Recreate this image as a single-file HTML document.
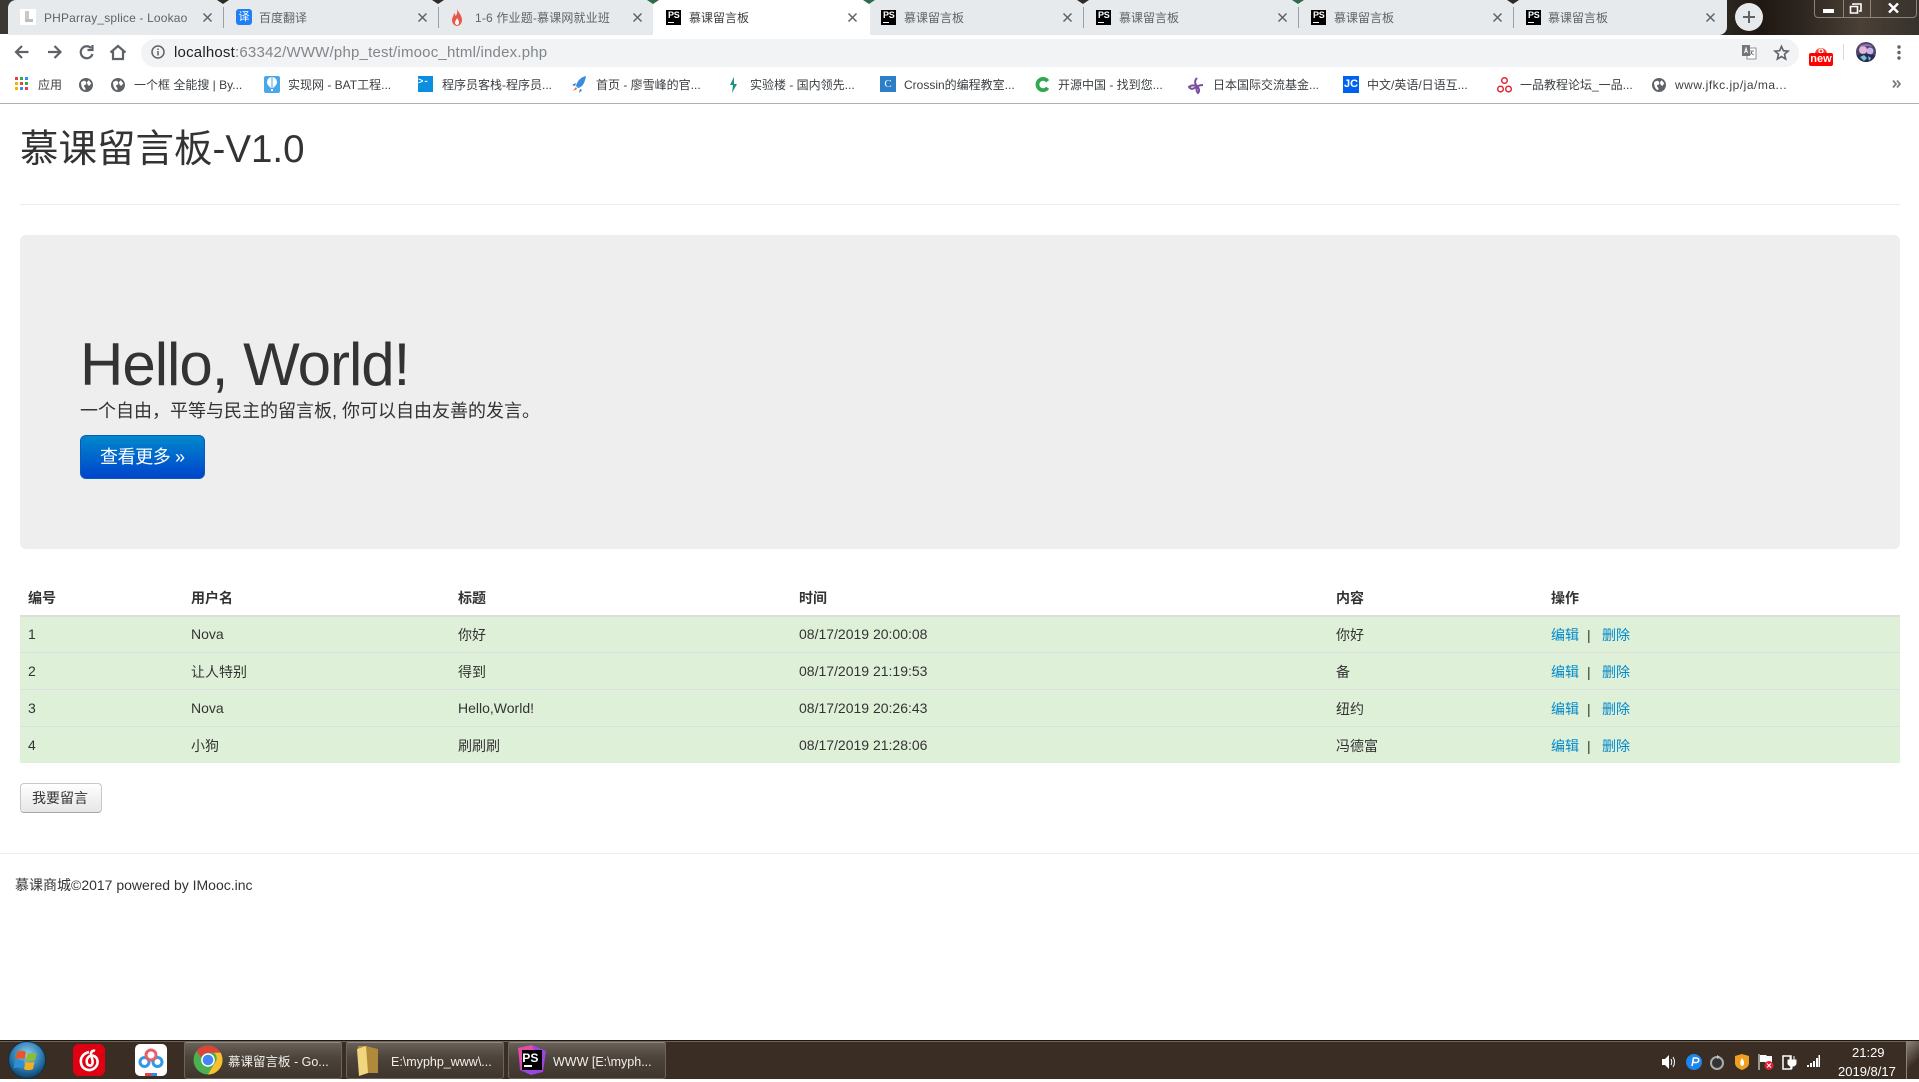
<!DOCTYPE html>
<html lang="zh"><head><meta charset="utf-8"><title>慕课留言板</title>
<style>
html,body{margin:0;padding:0;background:#fff}
body{width:1919px;height:1079px;position:relative;overflow:hidden;font-family:"Liberation Sans","Noto Sans CJK SC",sans-serif;color:#333}
.a{position:absolute}
.t{position:absolute;white-space:nowrap;line-height:20px;height:20px}
svg{position:absolute;overflow:visible}
.tabt{font-size:12px;color:#5f6368;top:8px}
.x{position:absolute;top:13px;width:9px;height:9px}
.x svg{left:0;top:0}
.sep{position:absolute;top:7px;width:1px;height:21px;background:#9aa0a6}
.bm{font-size:12px;color:#3c4043;top:75px}
.ps{position:absolute;top:10px;width:15px;height:15px;background:#000;color:#fff;font:bold 9px/11px "Liberation Sans",sans-serif;text-indent:2px;letter-spacing:-.3px}
.ps:after{content:"";position:absolute;left:2px;bottom:2px;width:6px;height:1px;background:#fff}
.mark{position:absolute;top:0;width:0;height:0;border-left:6px solid transparent;border-right:6px solid transparent;border-top:4px solid #2f2a24}
.g{border-top-color:#2f6b4a}
.td{font-size:14px;color:#333}
.th{font-size:14px;font-weight:bold;color:#333;top:588px}
.row{position:absolute;left:20px;width:1880px;height:36px;background:#dff0d8;border-top:1px solid #ddd}
.lk{color:#08c;font-size:14px}
.tb{position:absolute;top:1041px;height:36px;width:156px;border:1px solid #6d655c;border-radius:3px;background:linear-gradient(#6a625a,#4c433a 45%,#3f352c);box-shadow:inset 0 1px 0 rgba(255,255,255,.25)}
.tbt{color:#f2f0ec;font-size:12.5px;top:1051px}
</style></head><body>

<!-- window frame + tab strip -->
<div class="a" style="left:0;top:0;width:1919px;height:35px;background:linear-gradient(90deg,#3b3732 0,#2c2620 1728px,#1e1712 1760px,#2c251f 1800px,#4a4036 1860px,#37322c 1919px)"></div>
<div class="a" style="left:8px;top:0;width:1719px;height:35px;background:#e7eaed;border-radius:8px 0 8px 0"></div>
<div class="a" style="left:0;top:34px;width:8px;height:1px;background:#fff"></div>
<div class="a" style="left:653px;top:0;width:217px;height:35px;background:#fff;border-radius:8px 8px 0 0"></div>

<div class="mark" style="left:217px"></div><div class="mark" style="left:432px"></div>
<div class="mark g" style="left:647px"></div><div class="mark g" style="left:863px"></div>
<div class="mark" style="left:1077px"></div><div class="mark g" style="left:1292px"></div><div class="mark" style="left:1507px"></div>

<div class="sep" style="left:223px"></div><div class="sep" style="left:438px"></div><div class="sep" style="left:1083px"></div><div class="sep" style="left:1298px"></div><div class="sep" style="left:1513px"></div>

<!-- tab 1 -->
<div class="a" style="left:20px;top:9px;width:16px;height:16px;background:#fff"></div>
<div class="a" style="left:25px;top:11px;width:4px;height:11px;background:#c9c9c9"></div><div class="a" style="left:25px;top:19px;width:8px;height:3px;background:#bdbdbd"></div>
<div class="t tabt" style="left:44px;letter-spacing:.17px">PHParray_splice - Lookao</div>
<div class="x" style="left:203px"><svg width="9" height="9" viewBox="0 0 9 9"><path d="M.5.5l8 8M8.500.5l-8 8" stroke="#5f6368" stroke-width="1.500"/></svg></div>
<!-- tab 2 -->
<div class="a" style="left:236px;top:9px;width:16px;height:16px;background:#1f80f5;border-radius:3px;color:#fff;font-size:11px;line-height:16px;text-align:center">译</div>
<div class="t tabt" style="left:259px">百度翻译</div>
<div class="x" style="left:418px"><svg width="9" height="9" viewBox="0 0 9 9"><path d="M.5.5l8 8M8.500.5l-8 8" stroke="#5f6368" stroke-width="1.500"/></svg></div>
<!-- tab 3 -->
<svg style="left:451px;top:9px" width="12" height="17" viewBox="0 0 12 17"><path d="M6 0C7 3 11 6 11 11c0 3.500-2.500 6-5 6s-5-2.500-5-6c0-3 2-4 2-7 1 1 1.500 2 1.500 3C6 6 6.500 3 6 0z" fill="#e8574a"/><path d="M6 9c1 1.500 2 3 2 4.500S7 16 6 16s-2-1-2-2.500S5.500 11 6 9z" fill="#fff"/></svg>
<div class="t tabt" style="left:475px;letter-spacing:.17px">1-6 作业题-慕课网就业班</div>
<div class="x" style="left:633px"><svg width="9" height="9" viewBox="0 0 9 9"><path d="M.5.5l8 8M8.500.5l-8 8" stroke="#5f6368" stroke-width="1.500"/></svg></div>
<!-- tab 4 -->
<div class="ps" style="left:666px">PS</div><div class="t tabt" style="left:689px;color:#3c4043">慕课留言板</div>
<div class="x" style="left:848px"><svg width="9" height="9" viewBox="0 0 9 9"><path d="M.5.5l8 8M8.500.5l-8 8" stroke="#5f6368" stroke-width="1.500"/></svg></div>
<!-- tab 5-8 -->
<div class="ps" style="left:881px">PS</div><div class="t tabt" style="left:904px">慕课留言板</div>
<div class="x" style="left:1063px"><svg width="9" height="9" viewBox="0 0 9 9"><path d="M.5.5l8 8M8.500.5l-8 8" stroke="#5f6368" stroke-width="1.500"/></svg></div>
<div class="ps" style="left:1096px">PS</div><div class="t tabt" style="left:1119px">慕课留言板</div>
<div class="x" style="left:1278px"><svg width="9" height="9" viewBox="0 0 9 9"><path d="M.5.5l8 8M8.500.5l-8 8" stroke="#5f6368" stroke-width="1.500"/></svg></div>
<div class="ps" style="left:1311px">PS</div><div class="t tabt" style="left:1334px">慕课留言板</div>
<div class="x" style="left:1493px"><svg width="9" height="9" viewBox="0 0 9 9"><path d="M.5.5l8 8M8.500.5l-8 8" stroke="#5f6368" stroke-width="1.500"/></svg></div>
<div class="ps" style="left:1526px">PS</div><div class="t tabt" style="left:1548px">慕课留言板</div>
<div class="x" style="left:1706px"><svg width="9" height="9" viewBox="0 0 9 9"><path d="M.5.5l8 8M8.500.5l-8 8" stroke="#5f6368" stroke-width="1.500"/></svg></div>
<!-- new tab -->
<svg style="left:1735px;top:3px" width="28" height="28" viewBox="0 0 28 28"><circle cx="14" cy="14" r="14" fill="#e7eaed"/><path d="M14 8v12M8 14h12" stroke="#5f6368" stroke-width="2"/></svg>
<!-- window controls -->
<div class="a" style="left:1814px;top:-2px;width:103px;height:20px;border:1px solid #8d8479;border-radius:0 0 4px 4px;box-sizing:border-box"></div>
<div class="a" style="left:1843px;top:0;width:1px;height:17px;background:#8d8479"></div><div class="a" style="left:1870px;top:0;width:1px;height:17px;background:#8d8479"></div>
<div class="a" style="left:1823px;top:9px;width:11px;height:4px;background:#fff"></div>
<svg style="left:1849px;top:3px" width="13" height="11" viewBox="0 0 13 11"><path d="M4 2V1h8v7h-2M1.500 3.500h7v6.500h-7z" fill="none" stroke="#fff" stroke-width="1.600"/></svg>
<svg style="left:1888px;top:3px" width="11" height="10" viewBox="0 0 11 10"><path d="M1 .5l9 9M10 .5l-9 9" stroke="#fff" stroke-width="2.400"/></svg>

<!-- toolbar -->
<div class="a" style="left:0;top:35px;width:1919px;height:68px;background:#fff;border-bottom:1px solid #b0b0b0"></div>
<svg style="left:14px;top:44px" width="120" height="16" viewBox="0 0 120 16" fill="none" stroke="#5f6368" stroke-width="2.200">
<path d="M14.500 8H2M8 2 2 8l6 6"/><path d="M34 8h12.500M40.500 2l6 6-6 6"/>
<path d="M77 4A6 6 0 1 0 78.500 10M78.500 1v5h-5" /><path d="M96.500 8.500 104 2l7.500 6.500M99 7v8h10V7"/></svg>
<div class="a" style="left:141px;top:39px;width:1658px;height:28px;background:#f1f3f4;border-radius:14px"></div>
<svg style="left:151px;top:45px" width="14" height="14" viewBox="0 0 14 14"><circle cx="7" cy="7" r="6" fill="none" stroke="#5f6368" stroke-width="1.500"/><path d="M7 6v4.500M7 3.500v1.500" stroke="#5f6368" stroke-width="1.500"/></svg>
<div class="t" style="left:174px;top:43px;font-size:15px;letter-spacing:.2px;color:#80868b"><span style="color:#202124">localhost</span>:63342/WWW/php_test/imooc_html/index.php</div>
<svg style="left:1742px;top:45px" width="14" height="14" viewBox="0 0 14 14"><path d="M5 3h9v11H5z" fill="#fff" stroke="#777" stroke-width=".8"/><path d="M0 0h8v11H0z" fill="#72767a"/><path d="M2.500 8 4 3l1.500 5M3 6.500h2" stroke="#fff" fill="none" stroke-width=".9"/><path d="M8 6h4M10 6c0 2-1 3-2 4M9 7c.5 1.500 1.500 2.500 3 3" stroke="#666" fill="none" stroke-width=".8"/></svg>
<svg style="left:1774px;top:45px" width="15" height="15" viewBox="0 0 16 16"><path d="M8 1.500l2 4.600 5 .4-3.800 3.300L12.400 15 8 12.300 3.600 15l1.200-5.200L1 6.500l5-.4z" fill="none" stroke="#5f6368" stroke-width="1.700"/></svg>
<svg style="left:1815px;top:45px" width="12" height="9" viewBox="0 0 12 9"><path d="M0 9a6 6 0 0 1 12 0z" fill="#e8433a"/><circle cx="6" cy="6" r="2" fill="none" stroke="#fff" stroke-width="1.300"/></svg>
<div class="a" style="left:1809px;top:53px;width:24px;height:13px;background:#f00;color:#fff;font:bold 11px/12px 'Liberation Sans',sans-serif;text-align:center;border-radius:2px">new</div>
<div class="a" style="left:1843px;top:44px;width:1px;height:16px;background:#d5d7da"></div>
<svg style="left:1856px;top:42px" width="20" height="20" viewBox="0 0 20 20"><defs><clipPath id="av"><circle cx="10" cy="10" r="10"/></clipPath></defs><g clip-path="url(#av)"><rect width="20" height="20" fill="#4c4668"/><circle cx="7" cy="8" r="4" fill="#e3b8d8"/><circle cx="14" cy="9" r="3.500" fill="#c7b3e6"/><path d="M0 14c4-3 14-3 20 0v6H0z" fill="#2b2a50"/><path d="M4 15l4-2 3 3-3 3zM12 14l3 2-2 3z" fill="#6fc6d8"/><path d="M3 5c3-4 11-4 14 0-3-1-10-1-14 0z" fill="#8d6fb8"/></g></svg>
<svg style="left:1897px;top:45px" width="4" height="15" viewBox="0 0 4 15" fill="#5f6368"><circle cx="2" cy="2" r="1.700"/><circle cx="2" cy="7.500" r="1.700"/><circle cx="2" cy="13" r="1.700"/></svg>

<!-- bookmarks -->
<svg style="left:15px;top:77px" width="13" height="13" viewBox="0 0 13 13"><rect width="3" height="3" fill="#e8433a"/><rect x="5" width="3" height="3" fill="#34a853"/><rect x="10" width="3" height="3" fill="#4285f4"/><rect y="5" width="3" height="3" fill="#f4b400"/><rect x="5" y="5" width="3" height="3" fill="#e8433a"/><rect x="10" y="5" width="3" height="3" fill="#34a853"/><rect y="10" width="3" height="3" fill="#f4b400"/><rect x="5" y="10" width="3" height="3" fill="#4285f4"/><rect x="10" y="10" width="3" height="3" fill="#e8433a"/></svg>
<div class="t bm" style="left:38px">应用</div>
<svg style="left:79px;top:78px" width="14" height="14" viewBox="0 0 16 16"><circle cx="8" cy="8" r="8" fill="#5f6368"/><path d="M2.500 4.500 6 3c2 1 3 2 2 4S5 7 6 10c1 1 2 2 1 4-3-1-5-5-4.500-9.500zM11 2.500 14 6l-2 3-2-1-1-3z" fill="#fff"/></svg>
<svg style="left:111px;top:78px" width="14" height="14" viewBox="0 0 16 16"><circle cx="8" cy="8" r="8" fill="#5f6368"/><path d="M2.500 4.500 6 3c2 1 3 2 2 4S5 7 6 10c1 1 2 2 1 4-3-1-5-5-4.500-9.500zM11 2.500 14 6l-2 3-2-1-1-3z" fill="#fff"/></svg>
<div class="t bm" style="left:134px">一个框 全能搜 | By...</div>
<div class="a" style="left:264px;top:76px;width:16px;height:17px;background:#4aa8e8;border-radius:2px"></div><svg style="left:264px;top:76px" width="16" height="17" viewBox="0 0 16 17"><path d="M3 6a5 5 0 0 1 10 0c0 3-3 5-4 6H7C6 11 3 9 3 6z" fill="#fff"/><path d="M8 1v11" stroke="#4aa8e8"/><rect x="7" y="13" width="2" height="2" fill="#fff"/></svg>
<div class="t bm" style="left:288px">实现网 - BAT工程...</div>
<div class="a" style="left:418px;top:76px;width:15px;height:16px;background:#0a8fe0;color:#fff;font:bold 9px/12px 'Liberation Mono',monospace">&gt;-</div>
<div class="t bm" style="left:442px">程序员客栈-程序员...</div>
<svg style="left:571px;top:76px" width="16" height="17" viewBox="0 0 16 17"><path d="M15 0C10 1 6 5 5 10l2 2c5-1 7-6 8-12z" fill="#3d8be0"/><path d="M2 15l3-4 1 2z" fill="#e8574a"/><path d="M1 9l4-2-1 3zM9 13l-1 4 3-3z" fill="#2f6fc0"/></svg>
<div class="t bm" style="left:596px">首页 - 廖雪峰的官...</div>
<svg style="left:728px;top:77px" width="11" height="16" viewBox="0 0 11 16"><path d="M6 0 2 8h3l-1 8 5-9H6z" fill="#1f8f80"/></svg>
<div class="t bm" style="left:750px">实验楼 - 国内领先...</div>
<div class="a" style="left:880px;top:76px;width:16px;height:16px;background:#2c7fc4;color:#fff;font:11px/16px 'Liberation Serif',serif;text-align:center">C</div>
<div class="t bm" style="left:904px">Crossin的编程教室...</div>
<svg style="left:1035px;top:77px" width="15" height="15" viewBox="0 0 16 16"><path d="M13.500 4.500A6 6 0 1 0 13.500 11.500" fill="none" stroke="#2fa84f" stroke-width="4"/></svg>
<div class="t bm" style="left:1058px">开源中国 - 找到您...</div>
<svg style="left:1188px;top:77px" width="16" height="17" viewBox="0 0 16 17" fill="none" stroke="#7a4fa0" stroke-width="2"><path d="M9 1C6 4 7 7 9 9c2 2 3 5 1 7-2-2-2-5 0-7 2-1 4-1 5-1M9 9C6 8 3 8 1 10c2 3 5 2 8-1"/></svg>
<div class="t bm" style="left:1213px">日本国际交流基金...</div>
<div class="a" style="left:1343px;top:76px;width:16px;height:17px;background:#0060f0;color:#fff;font:bold 11px/17px 'Liberation Sans',sans-serif;text-align:center">JC</div>
<div class="t bm" style="left:1367px">中文/英语/日语互...</div>
<svg style="left:1497px;top:77px" width="15" height="16" viewBox="0 0 15 16" fill="none" stroke="#e0252f" stroke-width="1.500"><circle cx="7.500" cy="3.500" r="2.800"/><circle cx="3.500" cy="12" r="2.800"/><circle cx="11.500" cy="12" r="2.800"/></svg>
<div class="t bm" style="left:1520px">一品教程论坛_一品...</div>
<svg style="left:1652px;top:78px" width="14" height="14" viewBox="0 0 16 16"><circle cx="8" cy="8" r="8" fill="#5f6368"/><path d="M2.500 4.500 6 3c2 1 3 2 2 4S5 7 6 10c1 1 2 2 1 4-3-1-5-5-4.500-9.500zM11 2.500 14 6l-2 3-2-1-1-3z" fill="#fff"/></svg>
<div class="t bm" style="left:1675px;letter-spacing:.5px">www.jfkc.jp/ja/ma...</div>
<svg style="left:1892px;top:80px" width="9" height="8" viewBox="0 0 9 8" fill="none" stroke="#7a7e83" stroke-width="1.800"><path d="M1 0.500 4 4 1 7.500M5 0.500 8 4 5 7.500"/></svg>

<!-- page -->
<div class="t" style="left:20px;top:125px;height:50px;line-height:50px;font-size:38.5px;color:#333">慕课留言板-V1.0</div>
<div class="a" style="left:20px;top:204px;width:1880px;height:1px;background:#eee"></div>
<div class="a" style="left:20px;top:235px;width:1880px;height:314px;background:#eee;border-radius:6px"></div>
<div class="t" style="left:80px;top:330px;height:70px;line-height:70px;font-size:60px;color:#333;letter-spacing:-1px">Hello, World!</div>
<div class="t" style="left:80px;top:401px;font-size:18px;color:#333;">一个自由，平等与民主的留言板, 你可以自由友善的发言。</div>
<div class="a" style="left:80px;top:435px;width:125px;height:44px;border-radius:6px;background:linear-gradient(#08c,#04c);border:1px solid #0a5bb8;box-sizing:border-box"></div>
<div class="t" style="left:100px;top:447px;font-size:18px;color:#fff;letter-spacing:-.4px">查看更多 »</div>

<!-- table -->
<div class="t th" style="left:28px">编号</div><div class="t th" style="left:191px">用户名</div><div class="t th" style="left:458px">标题</div><div class="t th" style="left:799px">时间</div><div class="t th" style="left:1336px">内容</div><div class="t th" style="left:1551px">操作</div>
<div class="row" style="top:616px;border-top:0;height:37px"></div>
<div class="a" style="left:20px;top:615px;width:1880px;height:2px;background:#ddd"></div>
<div class="row" style="top:652px"></div><div class="row" style="top:689px"></div><div class="row" style="top:726px"></div>

<div class="t td" style="left:28px;top:624px">1</div><div class="t td" style="left:191px;top:624px">Nova</div><div class="t td" style="left:458px;top:625px">你好</div><div class="t td" style="left:799px;top:624px">08/17/2019 20:00:08</div><div class="t td" style="left:1336px;top:625px">你好</div>
<div class="t lk" style="left:1551px;top:625px">编辑</div><div class="t td" style="left:1587px;top:625px">|</div><div class="t lk" style="left:1602px;top:625px">删除</div>

<div class="t td" style="left:28px;top:661px">2</div><div class="t td" style="left:191px;top:662px">让人特别</div><div class="t td" style="left:458px;top:662px">得到</div><div class="t td" style="left:799px;top:661px">08/17/2019 21:19:53</div><div class="t td" style="left:1336px;top:662px">备</div>
<div class="t lk" style="left:1551px;top:662px">编辑</div><div class="t td" style="left:1587px;top:662px">|</div><div class="t lk" style="left:1602px;top:662px">删除</div>

<div class="t td" style="left:28px;top:698px">3</div><div class="t td" style="left:191px;top:698px">Nova</div><div class="t td" style="left:458px;top:698px">Hello,World!</div><div class="t td" style="left:799px;top:698px">08/17/2019 20:26:43</div><div class="t td" style="left:1336px;top:699px">纽约</div>
<div class="t lk" style="left:1551px;top:699px">编辑</div><div class="t td" style="left:1587px;top:699px">|</div><div class="t lk" style="left:1602px;top:699px">删除</div>

<div class="t td" style="left:28px;top:735px">4</div><div class="t td" style="left:191px;top:736px">小狗</div><div class="t td" style="left:458px;top:736px">刷刷刷</div><div class="t td" style="left:799px;top:735px">08/17/2019 21:28:06</div><div class="t td" style="left:1336px;top:736px">冯德富</div>
<div class="t lk" style="left:1551px;top:736px">编辑</div><div class="t td" style="left:1587px;top:736px">|</div><div class="t lk" style="left:1602px;top:736px">删除</div>

<!-- write button -->
<div class="a" style="left:20px;top:783px;width:82px;height:30px;box-sizing:border-box;border:1px solid #c8c8c8;border-bottom-color:#a8a8a8;border-radius:4px;background:linear-gradient(#fff,#e6e6e6)"></div>
<div class="t" style="left:32px;top:788px;font-size:14px;color:#333">我要留言</div>

<!-- footer -->
<div class="a" style="left:0;top:853px;width:1919px;height:1px;background:#eee"></div>
<div class="t" style="left:15px;top:875px;font-size:14px;color:#333">慕课商城©2017 powered by IMooc.inc</div>

<!-- taskbar -->
<div class="a" style="left:0;top:1040px;width:1919px;height:39px;background:#3a2e24;border-top:1px solid #1e1811;box-sizing:border-box;box-shadow:inset 0 1px 0 #6e645a"></div>
<svg style="left:8px;top:1041px" width="38" height="38" viewBox="0 0 38 38"><defs><radialGradient id="o" cx=".5" cy=".35" r=".65"><stop offset="0" stop-color="#8fd0f2"/><stop offset=".6" stop-color="#2f7db0"/><stop offset="1" stop-color="#0d3f66"/></radialGradient></defs><circle cx="19" cy="19" r="18.500" fill="url(#o)" stroke="#0c2f4a"/><path d="M9 11c3-1.500 6-1.500 9 0l-1.500 7.500c-3-1.500-6-1.500-9 0z" fill="#e8562a"/><path d="M19.500 11.500c3 1.500 6 1.500 9 0L27 19c-3 1.500-6 1.500-9 0z" fill="#8cc02a"/><path d="M7 20c3-1.500 6-1.500 9 0l-1.500 7.500c-3-1.500-6-1.500-9 0z" fill="#2a90d8"/><path d="M17.500 20.500c3 1.500 6 1.500 9 0L25 28c-3 1.500-6 1.500-9 0z" fill="#f4b020"/></svg>
<div class="a" style="left:73px;top:1044px;width:32px;height:32px;background:#e00012;border-radius:6px"></div>
<svg style="left:73px;top:1044px" width="32" height="32" viewBox="0 0 32 32" fill="none" stroke="#fff" stroke-width="2.600"><path d="M16 8C10 9.500 7 14 8 19c1 6 7 8 11 6.500 5-2 6.500-6.500 5-10.500-1.500-3.500-6-4.500-8.500-2-3 3-2 8 1 8.500 2.500.5 3.500-2 3-5l-1.500-6.500C18 7.500 20 6 22 7"/></svg>
<div class="a" style="left:135px;top:1044px;width:32px;height:32px;background:#fff;border-radius:5px"></div>
<svg style="left:135px;top:1044px" width="32" height="32" viewBox="0 0 32 32" fill="none" stroke-width="3"><circle cx="9.500" cy="18" r="4.500" stroke="#2f9be8"/><circle cx="22.500" cy="18" r="4.500" stroke="#2f9be8"/><circle cx="16" cy="11" r="5" stroke="#e8606a"/><rect x="10" y="29" width="6" height="3" fill="#e8433a" stroke="none"/><rect x="16" y="29" width="6" height="3" fill="#3a80f0" stroke="none"/></svg>

<div class="tb" style="left:184px"></div><div class="tb" style="left:346px"></div><div class="tb" style="left:508px"></div>
<svg style="left:193px;top:1045px" width="30" height="30" viewBox="0 0 30 30"><circle cx="15" cy="15" r="14.500" fill="#4caf50"/><path d="M15 .5a14.500 14.500 0 0 1 12.600 7.300H15a7.200 7.200 0 0 0-6.800 5L3.500 6A14.500 14.500 0 0 1 15 .5z" fill="#dc4437"/><path d="M27.600 7.800A14.500 14.500 0 0 1 15 29.500l6.300-10.900a7.200 7.200 0 0 0 0-10.800z" fill="#fbc02d"/><circle cx="15" cy="15" r="6.800" fill="#fff"/><circle cx="15" cy="15" r="5.300" fill="#4285f4"/></svg>
<div class="t tbt" style="left:228px;top:1052px">慕课留言板 - Go...</div>
<svg style="left:356px;top:1045px" width="24" height="32" viewBox="0 0 24 32"><path d="M2 1h8l12 3v24H4z" fill="#b08a3a"/><path d="M1 4l9-3 2 27-9 3z" fill="#f0d77e"/></svg>
<div class="t tbt" style="left:391px;top:1052px">E:\myphp_www\...</div>
<svg style="left:517px;top:1044px" width="30" height="32" viewBox="0 0 30 32"><path d="M1 4l14-3 14 6-3 21-12 3-11-5z" fill="#9b44e0"/><path d="M1 4l14-3 4 10-8 14-7 1z" fill="#e64da0"/><rect x="5" y="6" width="20" height="20" fill="#000"/><rect x="7" y="21" width="8" height="2" fill="#fff"/></svg>
<div class="t" style="left:523px;top:1052px;color:#fff;font:bold 11px/14px 'Liberation Sans',sans-serif;transform:scale(1.1)">PS</div>
<div class="t tbt" style="left:553px;top:1052px">WWW [E:\myph...</div>

<!-- tray -->
<svg style="left:1662px;top:1055px" width="14" height="14" viewBox="0 0 14 14"><path d="M0 4h3l4-4v14l-4-4H0z" fill="#fff"/><path d="M9 4c1 2 1 4 0 6M11 2c2 3 2 7 0 10" stroke="#fff" fill="none"/></svg>
<svg style="left:1686px;top:1054px" width="16" height="16" viewBox="0 0 16 16"><circle cx="8" cy="8" r="8" fill="#1c86ee"/><path d="M6 12l1.500-8h3a2 2 0 0 1 0 4.500H7" fill="none" stroke="#fff" stroke-width="1.600"/></svg>
<svg style="left:1709px;top:1054px" width="16" height="16" viewBox="0 0 16 16"><circle cx="8" cy="9" r="6" fill="#333" stroke="#aaa" stroke-width="2"/><path d="M8 1v4l3-2z" fill="#ccc"/></svg>
<svg style="left:1735px;top:1054px" width="14" height="16" viewBox="0 0 14 16"><path d="M0 2l7-2 7 2v7c0 4-4 6-7 7-3-1-7-3-7-7z" fill="#f0a020"/><path d="M7 4c2 3 3 5 1 8-3 0-4-3-1-8z" fill="#fff"/></svg>
<svg style="left:1758px;top:1054px" width="16" height="16" viewBox="0 0 16 16"><path d="M1 0v16" stroke="#fff"/><path d="M2 1h6l1 1h5v7H8L7 8H2z" fill="#fff"/><circle cx="11" cy="11.500" r="4.500" fill="#e02030"/><path d="M9 9.500l4 4M13 9.500l-4 4" stroke="#fff"/></svg>
<svg style="left:1782px;top:1054px" width="15" height="16" viewBox="0 0 15 16"><path d="M1 2h8v13H1z" fill="none" stroke="#fff" stroke-width="1.500"/><path d="M6 6h8v4l-2 2h-4l-2-2zM8 2v4M12 2v4M10 12v3" fill="#fff" stroke="#fff"/></svg>
<svg style="left:1807px;top:1055px" width="13" height="12" viewBox="0 0 13 12" fill="#fff"><rect x="0" y="10" width="2" height="2"/><rect x="3" y="8" width="2" height="4"/><rect x="6" y="6" width="2" height="6"/><rect x="9" y="3" width="2" height="9"/><rect x="11.500" y="0" width="1.500" height="12"/></svg>
<div class="t" style="left:1852px;top:1043px;color:#fff;font-size:13px">21:29</div>
<div class="t" style="left:1838px;top:1062px;color:#fff;font-size:13px">2019/8/17</div>
<div class="a" style="left:1906px;top:1041px;width:13px;height:38px;background:linear-gradient(135deg,#8d857a,#3a2e24 60%);border-left:1px solid #8d8479;box-sizing:border-box"></div>
</body></html>
